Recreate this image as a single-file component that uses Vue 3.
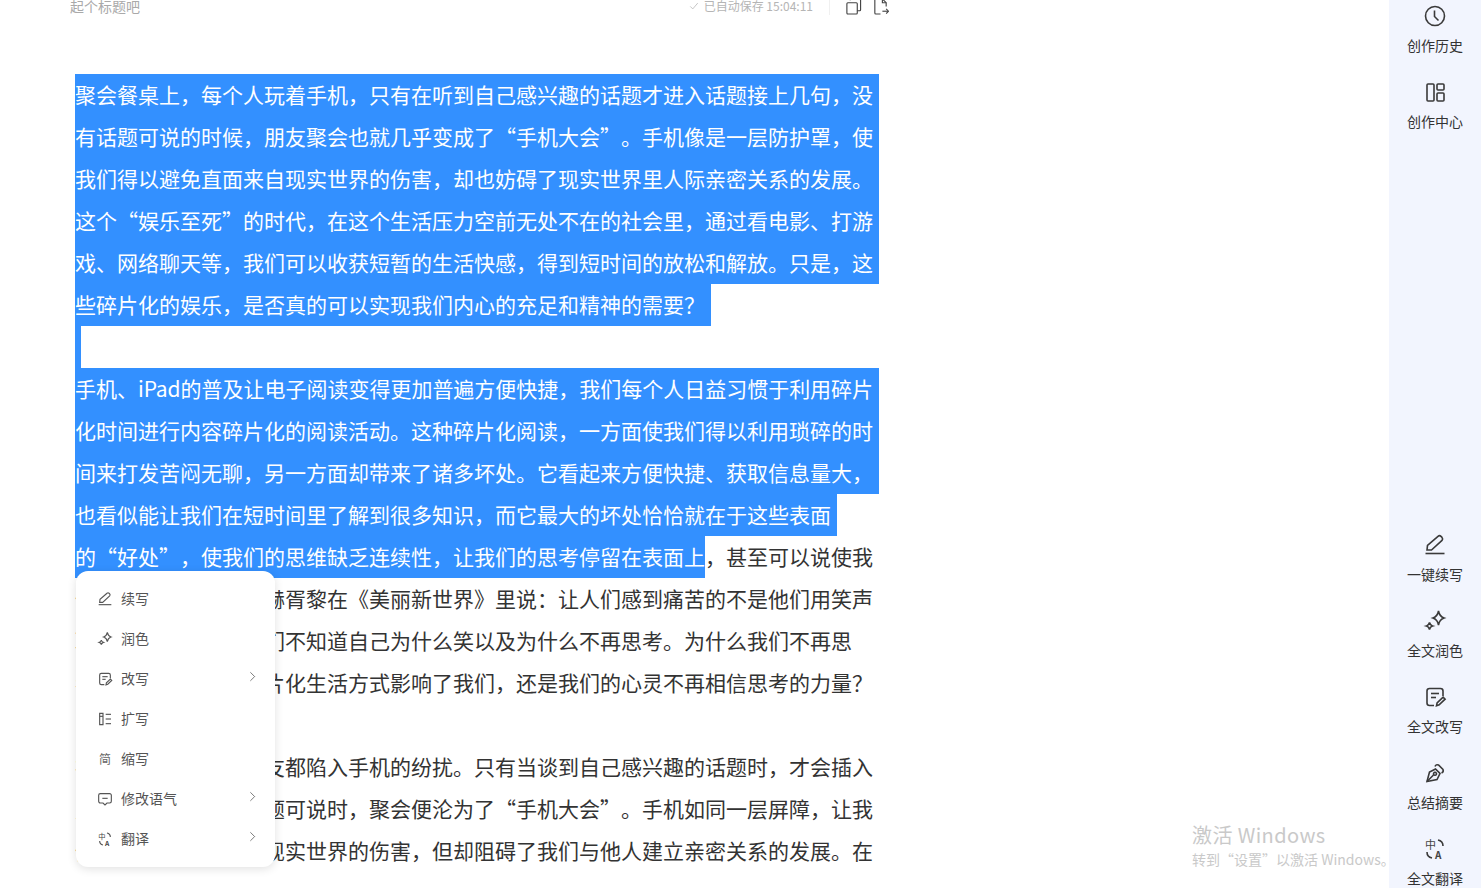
<template>
  <div class="page" lang="zh-CN">
    <main class="editor">
      <header class="head">
        <span class="title">起个标题吧</span>
        <div class="status">
          <svg class="check" viewBox="0 0 12 12"><path d="M1.5 6.5l3 3 6-7" /></svg>
          <span>已自动保存 15:04:11</span>
          <i class="divider"></i>
          <svg class="head-ico" viewBox="0 0 18 18"><path v-for="d in icons.copy" :key="d" :d="d" /></svg>
          <svg class="head-ico" viewBox="0 0 18 18"><path v-for="d in icons.exportDoc" :key="d" :d="d" /></svg>
        </div>
      </header>

      <div class="content">
        <div v-for="(l, i) in lines" :key="i" class="line">
          <span v-if="l.sel !== undefined" class="sel" :class="{ full: l.full, tail: !l.rest, tight: l.tight }">{{ l.sel }}</span><span v-if="l.rest">{{ l.rest }}</span><span v-if="l.plain">{{ l.plain }}</span>
        </div>

        <ul class="menu">
          <li v-for="m in menu" :key="m.label" class="menu-item">
            <svg class="menu-ico" viewBox="0 0 24 24">
              <path v-for="d in icons[m.icon]" :key="d" :d="d" />
              <template v-if="m.icon === 'translate'">
                <text x="2" y="12" class="zh">中</text>
                <text x="12" y="22" class="en">A</text>
              </template>
              <text v-if="m.icon === 'jian'" x="3" y="19" class="jian">简</text>
            </svg>
            <span class="menu-label">{{ m.label }}</span>
            <svg v-if="m.more" class="chev" viewBox="0 0 8 14"><path d="M1.5 1.5l5 5-5 5" /></svg>
          </li>
        </ul>
      </div>
    </main>

    <aside class="side">
      <div class="side-group">
        <div v-for="s in sideTop" :key="s.label" class="side-item">
          <svg class="side-ico" viewBox="0 0 24 24"><path v-for="d in icons[s.icon]" :key="d" :d="d" /></svg>
          <span>{{ s.label }}</span>
        </div>
      </div>
      <div class="side-group bottom">
        <div v-for="s in sideBottom" :key="s.label" class="side-item">
          <svg class="side-ico" viewBox="0 0 24 24">
            <path v-for="d in icons[s.icon]" :key="d" :d="d" />
            <template v-if="s.icon === 'translate'">
              <text x="2" y="12" class="zh">中</text>
              <text x="12" y="22" class="en">A</text>
            </template>
          </svg>
          <span>{{ s.label }}</span>
        </div>
      </div>
    </aside>

    <div class="watermark">
      <div class="wm-big">激活 Windows</div>
      <div class="wm-small">转到“设置”以激活 Windows。</div>
    </div>
  </div>
</template>

<script setup>
// body copy uses full-width punctuation
const cn = s => s.replace(/,/g, '\uff0c').replace(/:/g, '\uff1a').replace(/\?/g, '\uff1f')

const lines = [
  { sel: '聚会餐桌上,每个人玩着手机,只有在听到自己感兴趣的话题才进入话题接上几句,没', full: true },
  { sel: '有话题可说的时候,朋友聚会也就几乎变成了“手机大会”。手机像是一层防护罩,使', full: true },
  { sel: '我们得以避免直面来自现实世界的伤害,却也妨碍了现实世界里人际亲密关系的发展。', full: true },
  { sel: '这个“娱乐至死”的时代,在这个生活压力空前无处不在的社会里,通过看电影、打游', full: true },
  { sel: '戏、网络聊天等,我们可以收获短暂的生活快感,得到短时间的放松和解放。只是,这', full: true },
  { sel: '些碎片化的娱乐,是否真的可以实现我们内心的充足和精神的需要?' },
  { sel: '' },
  { sel: '手机、iPad的普及让电子阅读变得更加普遍方便快捷,我们每个人日益习惯于利用碎片', full: true, tight: true },
  { sel: '化时间进行内容碎片化的阅读活动。这种碎片化阅读,一方面使我们得以利用琐碎的时', full: true },
  { sel: '间来打发苦闷无聊,另一方面却带来了诸多坏处。它看起来方便快捷、获取信息量大,', full: true },
  { sel: '也看似能让我们在短时间里了解到很多知识,而它最大的坏处恰恰就在于这些表面' },
  { sel: '的“好处”,使我们的思维缺乏连续性,让我们的思考停留在表面上', rest: ',甚至可以说使我' },
  { plain: '们不思考。阿道司·赫胥黎在《美丽新世界》里说:让人们感到痛苦的不是他们用笑声' },
  { plain: '取代了思考,而是他们不知道自己为什么笑以及为什么不再思考。为什么我们不再思' },
  { plain: '考?是因为这样的碎片化生活方式影响了我们,还是我们的心灵不再相信思考的力量?' },
  { plain: '\u00a0' },
  { plain: '在聚会的餐桌上,朋友都陷入手机的纷扰。只有当谈到自己感兴趣的话题时,才会插入' },
  { plain: '几句话。而当没有话题可说时,聚会便沦为了“手机大会”。手机如同一层屏障,让我' },
  { plain: '们能够直接避免来自现实世界的伤害,但却阻碍了我们与他人建立亲密关系的发展。在' }
].map(l => ({
  ...l,
  sel: l.sel === undefined ? undefined : cn(l.sel),
  rest: l.rest && cn(l.rest),
  plain: l.plain && cn(l.plain)
}))

const menu = [
  { label: '续写', icon: 'pen' },
  { label: '润色', icon: 'spark' },
  { label: '改写', icon: 'note', more: true },
  { label: '扩写', icon: 'expand' },
  { label: '缩写', icon: 'jian' },
  { label: '修改语气', icon: 'chat', more: true },
  { label: '翻译', icon: 'translate', more: true }
]

const sideTop = [
  { label: '创作历史', icon: 'clock' },
  { label: '创作中心', icon: 'layout' }
]

const sideBottom = [
  { label: '一键续写', icon: 'pen' },
  { label: '全文润色', icon: 'spark' },
  { label: '全文改写', icon: 'note' },
  { label: '总结摘要', icon: 'nib' },
  { label: '全文翻译', icon: 'translate' }
]

const icons = {
  clock: ['M12 2.5a9.5 9.5 0 1 0 0 19a9.5 9.5 0 1 0 0-19z', 'M11.5 6.5v6l4 4'],
  layout: [
    'M5 4h5a1 1 0 0 1 1 1v15a1 1 0 0 1-1 1H5a1 1 0 0 1-1-1V5a1 1 0 0 1 1-1z',
    'M15 4h5a1 1 0 0 1 1 1v4a1 1 0 0 1-1 1h-5a1 1 0 0 1-1-1V5a1 1 0 0 1 1-1z',
    'M15 13h5a1 1 0 0 1 1 1v6a1 1 0 0 1-1 1h-5a1 1 0 0 1-1-1v-6a1 1 0 0 1 1-1z'
  ],
  pen: [
    'M4 17l.5-4.500L15 3.300q1.600-1.300 3 .1l1 1q1.300 1.500 0 3L8.500 17z',
    'M2.500 20.500h19'
  ],
  spark: [
    'M15.500 2q1 5.500 5.500 7q-4.500 1.500-5.500 7q-1-5.500-5.500-7q4.500-1.500 5.500-7z',
    'M6.500 13.500q.5 2.800 3 3.500q-2.500.7-3 3.500q-.5-2.800-3-3.500q2.500-.7 3-3.500z'
  ],
  note: [
    'M20 11V6a2.500 2.500 0 0 0-2.500-2.500h-11A2.500 2.500 0 0 0 4 6v12a2.500 2.500 0 0 0 2.500 2.500H11',
    'M8 8.500h8',
    'M8 12.500h5',
    'M13.500 20.800l.6-3 6-5.600 2 2-6 5.600z'
  ],
  nib: [
    'M4 20.500L6.500 11l6-3 4.500 4.500-3 6z',
    'M12 5.500q1-2.500 3.500-1.500l4.500 4.500q1 2.500-1.500 3.500',
    'M4 20.500l6.500-6.500',
    'M12 11.300a1.500 1.500 0 1 0 .01 0z'
  ],
  translate: [
    'M15 3q5 1 5 6',
    'M9 21q-5-1-5-6'
  ],
  expand: [
    'M4 3.500h5v17H4z',
    'M4 8h5',
    'M13 5h8',
    'M13 12h8',
    'M13 19h8'
  ],
  jian: [],
  chat: [
    'M5 4h14a2.500 2.500 0 0 1 2.500 2.500v9A2.500 2.500 0 0 1 19 18h-4l-3 3-3-3H5a2.500 2.500 0 0 1-2.500-2.500v-9A2.500 2.500 0 0 1 5 4z',
    'M8 11h8'
  ],
  copy: [
    'M3 5h9a1 1 0 0 1 1 1v10a1 1 0 0 1-1 1H3a1 1 0 0 1-1-1V6a1 1 0 0 1 1-1z',
    'M5.500 2.500V1.500h10a1 1 0 0 1 1 1v10a1 1 0 0 1-1 1H13'
  ],
  exportDoc: [
    'M9 17H4a1 1 0 0 1-1-1V2a1 1 0 0 1 1-1h7l4 4v4',
    'M11 1v4h4',
    'M11 14h6',
    'M15 11.500l2.500 2.500-2.500 2.500'
  ]
}
</script>

<style scoped>
.page {
  display: flex;
  height: 888px;
  overflow: hidden;
  position: relative;
  background: #fff;
  font-family: "Noto Sans CJK SC", "Noto Sans", sans-serif;
  text-spacing-trim: space-all;
  color: #333;
}

.editor {
  flex: 1;
  min-width: 0;
  padding-left: 70px;
}

.head {
  width: 820px;
  height: 20px;
  margin-top: -4px;
  margin-bottom: 58px;
  display: flex;
  align-items: center;
  justify-content: space-between;
  font-size: 14px;
  line-height: 20px;
}

.title {
  color: #a9a9a9;
}

.status {
  display: flex;
  align-items: center;
  font-size: 12px;
  color: #b5b5b5;
}

.check {
  width: 10px;
  height: 10px;
  margin-right: 5px;
  fill: none;
  stroke: #bbb;
  stroke-width: 1;
}

.divider {
  width: 1px;
  height: 18px;
  background: #f0f0f0;
  margin: 0 15px 0 16px;
}

.head-ico {
  width: 17px;
  height: 17px;
  margin-right: 10px;
  fill: none;
  stroke: #444;
  stroke-width: 1.2;
}

.head-ico:last-child {
  margin-right: 1px;
}

.content {
  position: relative;
  margin-left: 5px;
  width: 804px;
  font-size: 21px;
}

.line {
  height: 42px;
  line-height: 40px;
  white-space: nowrap;
}

.sel {
  display: inline-block;
  height: 42px;
  vertical-align: top;
  background: #3390ff;
  color: #fff;
}

.sel.tail {
  padding-right: 6px;
}

.sel.full {
  box-sizing: border-box;
  width: 804px;
  padding-right: 6px;
  text-align: justify;
  text-align-last: justify;
  white-space: normal;
}

.sel.tight {
  white-space: nowrap;
  letter-spacing: -.1px;
}

.menu {
  position: absolute;
  left: 1px;
  top: 497px;
  width: 199px;
  margin: 0;
  padding: 8px 0;
  list-style: none;
  background: #fff;
  border-radius: 12px;
  box-shadow: 0 2px 10px rgba(0, 0, 0, .12);
}

.menu-item {
  height: 40px;
  display: flex;
  align-items: center;
  padding-left: 21px;
  font-size: 14px;
  line-height: 20px;
  color: #555;
}

.menu-ico {
  width: 16px;
  height: 16px;
  margin-right: 8px;
  fill: none;
  stroke: #555;
  stroke-width: 1.7;
}

.menu-label {
  flex: 1;
  padding-bottom: 2px;
}

.chev {
  width: 7px;
  height: 12px;
  margin: -4px 19px 0 0;
  fill: none;
  stroke: #666;
  stroke-width: 1;
}

.side {
  width: 92px;
  flex: none;
  background: #f2f5fe;
  display: flex;
  flex-direction: column;
}

.side-group {
  margin-top: 4px;
}

.side-group.bottom {
  margin-top: auto;
  margin-bottom: -25px;
}

.side-item {
  height: 76px;
  display: flex;
  flex-direction: column;
  align-items: center;
  font-size: 14px;
  line-height: 20px;
  color: #333;
}

.side-ico {
  width: 24px;
  height: 24px;
  margin-bottom: 7px;
  fill: none;
  stroke: #3a3a3a;
  stroke-width: 1.6;
}

.zh,
.en {
  fill: #444;
  stroke: none;
  font-size: 11px;
}

.en {
  font-weight: 700;
  font-size: 10px;
}

.jian {
  fill: #666;
  stroke: none;
  font-size: 18px;
}

.watermark {
  position: absolute;
  left: 1192px;
  top: 821px;
  color: #c9c9c9;
  pointer-events: none;
}

.wm-big {
  font-size: 20px;
  line-height: 28px;
  letter-spacing: .4px;
}

.wm-small {
  font-size: 14px;
  line-height: 20px;
  white-space: nowrap;
}
</style>

<style>
html,
body {
  margin: 0;
  overflow: hidden;
}
</style>
